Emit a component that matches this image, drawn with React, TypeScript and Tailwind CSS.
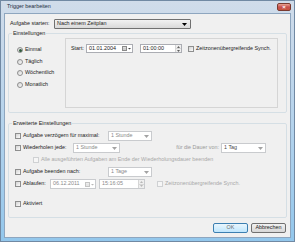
import React from "react";

function DownArrow({ color = "#000000" }: { color?: string }) {
  return (
    <svg width="5" height="3" viewBox="0 0 5 3" className="shrink-0">
      <path d="M0 0h5L2.5 3z" fill={color} />
    </svg>
  );
}

function CheckBox({ disabled }: { disabled?: boolean }) {
  return (
    <span
      className={
        disabled
          ? "block h-[6px] w-[6px] shrink-0 border border-[#cfd1d3] bg-[#f6f6f6]"
          : "block h-[6px] w-[6px] shrink-0 border border-[#8e8f8f] bg-gradient-to-br from-[#d4d4d4] to-[#fbfbfb]"
      }
    />
  );
}

function Radio({ checked }: { checked?: boolean }) {
  return (
    <span className="flex h-[6px] w-[6px] shrink-0 items-center justify-center rounded-full border border-[#8e8f8f] bg-gradient-to-br from-[#d4d4d4] to-[#fbfbfb]">
      {checked && <span className="block h-[3px] w-[3px] rounded-full bg-[#2f5a3c]" />}
    </span>
  );
}

function CalendarIcon({ disabled }: { disabled?: boolean }) {
  const c = disabled ? "#c4c4c4" : "#8a8a8a";
  return (
    <svg width="9" height="5" viewBox="0 0 9 5" className="shrink-0">
      <rect x="0.5" y="0.5" width="4" height="4" fill="#ffffff" stroke={c} />
      <path d="M1 2h3M1 3.2h3" stroke={c} strokeWidth="0.6" />
      <path d="M6 2h3L7.5 3.5z" fill={disabled ? "#b8b8b8" : "#444444"} />
    </svg>
  );
}

function Spinner({ disabled }: { disabled?: boolean }) {
  const c = disabled ? "#b8b8b8" : "#606060";
  return (
    <div className="flex h-full w-[6px] shrink-0 flex-col border-l border-[#d6d6d6] bg-[#efefef]">
      <div className="flex flex-1 items-center justify-center border-b border-[#d6d6d6]">
        <svg width="3" height="2" viewBox="0 0 3 2">
          <path d="M0 2h3L1.5 0z" fill={c} />
        </svg>
      </div>
      <div className="flex flex-1 items-center justify-center">
        <svg width="3" height="2" viewBox="0 0 3 2">
          <path d="M0 0h3L1.5 2z" fill={c} />
        </svg>
      </div>
    </div>
  );
}

function DropBox({ text, className, dark }: { text: string; className: string; dark?: boolean }) {
  return (
    <div
      className={`flex h-[10px] shrink-0 items-center justify-between border border-[#c9cbce] bg-white pl-[2px] pr-[2px] ${
        dark ? "text-[#4a4a4a]" : "text-[#8a8a8a]"
      } ${className}`}
    >
      <span>{text}</span>
      <DownArrow color="#a3a3a3" />
    </div>
  );
}

function Button({ label, primary }: { label: string; primary?: boolean }) {
  return (
    <div
      className={
        primary
          ? "flex h-[10px] w-[35px] items-center justify-center rounded-[2px] border border-[#3c7fb1] bg-gradient-to-b from-[#eaf6fd] to-[#bee6fd] text-[#6d6d6d]"
          : "flex h-[10px] w-[35px] items-center justify-center rounded-[2px] border border-[#707070] bg-gradient-to-b from-[#f2f2f2] to-[#d6d6d6]"
      }
    >
      {label}
    </div>
  );
}

export default function App() {
  return (
    <div className="flex h-[242px] w-[295px] flex-col border border-[#7189a3] bg-gradient-to-b from-[#d0dcea] via-[#b5d3ec] to-[#93c7ec] font-['Liberation_Sans',sans-serif] text-[5.4px] leading-none text-[#1b1b1b]">
      {/* Title bar */}
      <div className="flex h-[12px] shrink-0 items-start justify-between pl-[6px] pr-[3px]">
        <span className="mt-[3px] text-[#1e2d3f]">Trigger bearbeiten</span>
        <div className="mt-[2px] flex h-[8px] w-[14px] items-center justify-center rounded-[2px] border border-[#7a3a30] bg-gradient-to-b from-[#e8a493] via-[#c75050] to-[#c8543c]">
          <span className="text-[6px] font-bold text-white">×</span>
        </div>
      </div>

      {/* Client area */}
      <div className="mx-[3px] mb-[3px] flex flex-1 flex-col border border-[#8ea6bf] bg-[#f0f0f0]">
        {/* Aufgabe starten */}
        <div className="mt-[5px] flex h-[10px] items-center pl-[5px]">
          <span className="w-[44px]">Aufgabe starten:</span>
          <div className="flex h-[10px] w-[137px] items-center justify-between rounded-[1px] border border-[#707070] bg-gradient-to-b from-[#f2f2f2] to-[#d9d9d9] pl-[2px] pr-[3px]">
            <span>Nach einem Zeitplan</span>
            <DownArrow />
          </div>
        </div>

        {/* Einstellungen */}
        <fieldset className="mx-[3px] mt-[1px] rounded-[2px] border border-[#d5dfe5]">
          <legend className="ml-[3px] h-[6px] px-[1px] leading-[6px]">Einstellungen</legend>
          <div className="flex pb-[4px] pl-[8px] pt-[2px]">
            <div className="flex w-[48px] flex-col gap-[5.5px] pt-[9px]">
              <div className="flex h-[6px] items-center gap-[2px]">
                <Radio checked />
                <span>Einmal</span>
              </div>
              <div className="flex h-[6px] items-center gap-[2px]">
                <Radio />
                <span>Täglich</span>
              </div>
              <div className="flex h-[6px] items-center gap-[2px]">
                <Radio />
                <span>Wöchentlich</span>
              </div>
              <div className="flex h-[6px] items-center gap-[2px]">
                <Radio />
                <span>Monatlich</span>
              </div>
            </div>
            <div className="h-[70px] w-[213px] border border-[#d5d5d5] pl-[5px] pt-[5px]">
              <div className="flex h-[9px] items-center">
                <span className="w-[15px]">Start:</span>
                <div className="flex h-[9px] w-[47px] items-center justify-between border border-[#abadb3] bg-white pl-[2px] pr-[1px]">
                  <span>01.01.2004</span>
                  <CalendarIcon />
                </div>
                <div className="ml-[7px] flex h-[9px] w-[42px] items-center justify-between border border-[#abadb3] bg-white pl-[2px]">
                  <span>01:00:00</span>
                  <Spinner />
                </div>
                <div className="ml-[6px] flex items-center gap-[2px]">
                  <CheckBox />
                  <span>Zeitzonenübergreifende Synch.</span>
                </div>
              </div>
            </div>
          </div>
        </fieldset>

        {/* Erweiterte Einstellungen */}
        <fieldset className="mx-[3px] mt-[7px] rounded-[2px] border border-[#d5dfe5]">
          <legend className="ml-[3px] h-[6px] px-[1px] leading-[6px]">Erweiterte Einstellungen</legend>
          <div className="flex flex-col gap-[2px] pb-[8px] pl-[6px] pt-[5px]">
            <div className="flex h-[10px] items-center">
              <div className="flex w-[93px] items-center gap-[2px]">
                <CheckBox />
                <span>Aufgabe verzögern für maximal:</span>
              </div>
              <DropBox text="1 Stunde" className="w-[44px]" />
            </div>
            <div className="flex h-[10px] items-center">
              <div className="flex w-[58px] items-center gap-[2px]">
                <CheckBox />
                <span>Wiederholen jede:</span>
              </div>
              <DropBox text="1 Stunde" className="w-[47px]" />
              <span className="w-[101px] pr-[2px] text-right text-[#9a9a9a]">für die Dauer von:</span>
              <DropBox text="1 Tag" className="w-[45px]" dark />
            </div>
            <div className="flex h-[10px] items-center gap-[2px] pl-[18px]">
              <CheckBox disabled />
              <span className="text-[#a8a8a8]">Alle ausgeführten Aufgaben am Ende der Wiederholungsdauer beenden</span>
            </div>
            <div className="flex h-[10px] items-center">
              <div className="flex w-[93px] items-center gap-[2px]">
                <CheckBox />
                <span>Aufgabe beenden nach:</span>
              </div>
              <DropBox text="1 Tage" className="w-[44px]" />
            </div>
            <div className="flex h-[10px] items-center">
              <div className="flex w-[35px] items-center gap-[2px]">
                <CheckBox />
                <span>Ablaufen:</span>
              </div>
              <div className="flex h-[10px] w-[46px] items-center justify-between border border-[#c9cbce] bg-white pl-[2px] pr-[1px] text-[#8a8a8a]">
                <span>06.12.2011</span>
                <CalendarIcon disabled />
              </div>
              <div className="ml-[3px] flex h-[10px] w-[46px] items-center justify-between border border-[#c9cbce] bg-white pl-[2px] text-[#8a8a8a]">
                <span>15:16:05</span>
                <Spinner disabled />
              </div>
              <div className="ml-[12px] flex items-center gap-[2px]">
                <CheckBox disabled />
                <span className="text-[#a8a8a8]">Zeitzonenübergreifende Synch.</span>
              </div>
            </div>
            <div className="mt-[8px] flex h-[10px] items-center gap-[2px]">
              <CheckBox />
              <span>Aktiviert</span>
            </div>
          </div>
        </fieldset>

        {/* Buttons */}
        <div className="mt-[5px] flex justify-end gap-[3px] pr-[4px]">
          <Button label="OK" primary />
          <Button label="Abbrechen" />
        </div>
      </div>
    </div>
  );
}
